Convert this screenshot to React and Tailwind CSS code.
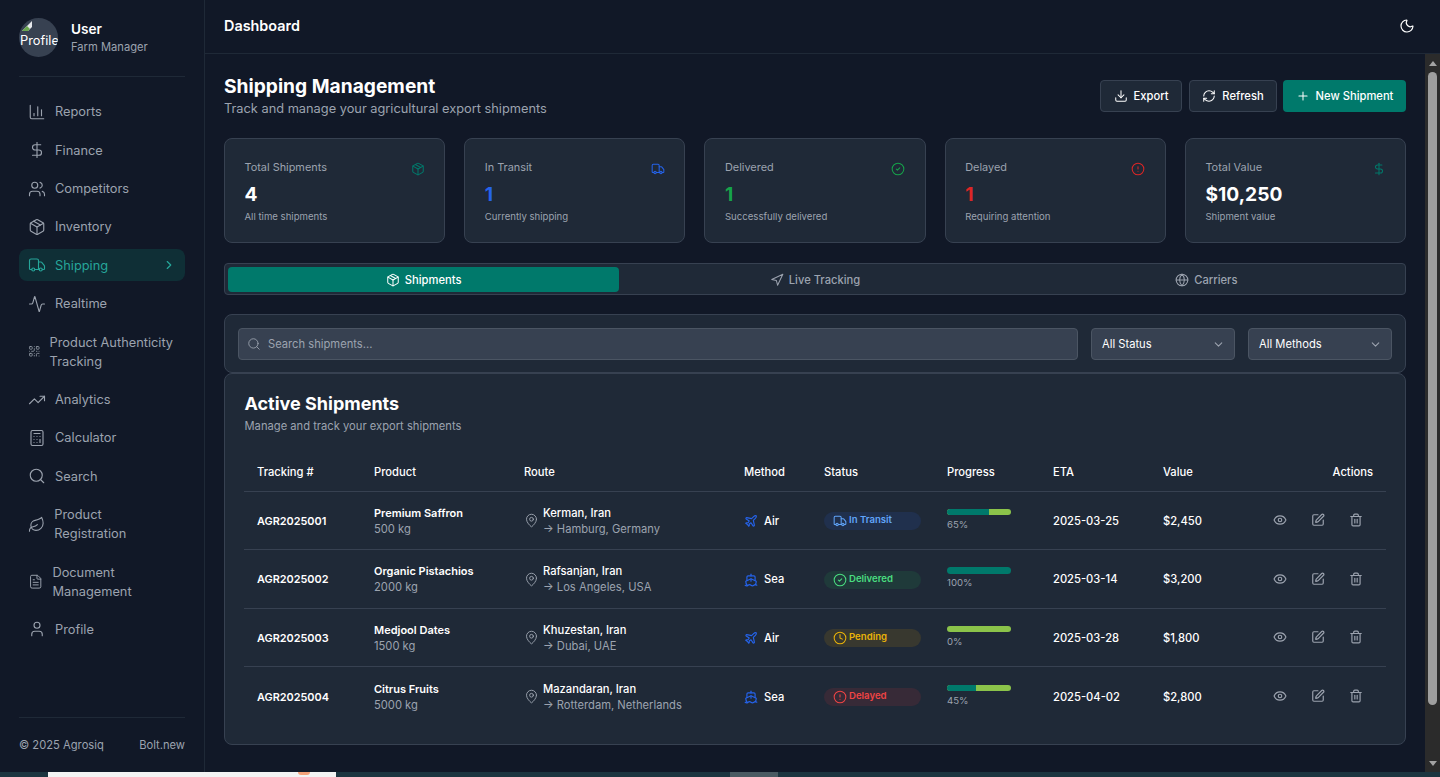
import React from 'react';
import {
  Activity, ChartColumn, Calculator, ChevronDown, ChevronRight, CircleAlert, CircleCheck, Clock, DollarSign, Download, Edit, Eye, FileText,
  Globe, Leaf, MapPin, Moon, Navigation, Package, Plane, Plus, QrCode, RefreshCw, Search, Ship, Trash2, TrendingUp, Truck, User, Users,
} from 'lucide-react';

const navItems = [
  { label: 'Reports', icon: ChartColumn },
  { label: 'Finance', icon: DollarSign },
  { label: 'Competitors', icon: Users },
  { label: 'Inventory', icon: Package },
  { label: 'Shipping', icon: Truck, active: true },
  { label: 'Realtime', icon: Activity },
  { label: 'Product Authenticity Tracking', icon: QrCode, size: 12.6 },
  { label: 'Analytics', icon: TrendingUp },
  { label: 'Calculator', icon: Calculator },
  { label: 'Search', icon: Search },
  { label: 'Product Registration', icon: Leaf, size: 17.3 },
  { label: 'Document Management', icon: FileText, size: 15.4 },
  { label: 'Profile', icon: User },
];

const stats = [
  { label: 'Total Shipments', value: '4', note: 'All time shipments', icon: Package, iconClass: 'text-[#00796b]', valueClass: 'text-white' },
  { label: 'In Transit', value: '1', note: 'Currently shipping', icon: Truck, iconClass: 'text-[#2563eb]', valueClass: 'text-[#2563eb]' },
  { label: 'Delivered', value: '1', note: 'Successfully delivered', icon: CircleCheck, iconClass: 'text-[#16a34a]', valueClass: 'text-[#16a34a]' },
  { label: 'Delayed', value: '1', note: 'Requiring attention', icon: CircleAlert, iconClass: 'text-[#dc2626]', valueClass: 'text-[#dc2626]' },
  { label: 'Total Value', value: '$10,250', note: 'Shipment value', icon: DollarSign, iconClass: 'text-[#00796b]', valueClass: 'text-white' },
];

const statusStyles = {
  'In Transit': { icon: Truck, className: 'bg-[#20304d] text-[#60a5fa]' },
  Delivered: { icon: CircleCheck, className: 'bg-[#1f3a3a] text-[#4ade80]' },
  Pending: { icon: Clock, className: 'bg-[#38382f] text-[#eab308]' },
  Delayed: { icon: CircleAlert, className: 'bg-[#372a37] text-[#ef4444]' },
};

const shipments = [
  { id: 'AGR2025001', product: 'Premium Saffron', qty: '500 kg', from: 'Kerman, Iran', to: 'Hamburg, Germany', method: 'Air', status: 'In Transit', progress: 65, eta: '2025-03-25', value: '$2,450' },
  { id: 'AGR2025002', product: 'Organic Pistachios', qty: '2000 kg', from: 'Rafsanjan, Iran', to: 'Los Angeles, USA', method: 'Sea', status: 'Delivered', progress: 100, eta: '2025-03-14', value: '$3,200' },
  { id: 'AGR2025003', product: 'Medjool Dates', qty: '1500 kg', from: 'Khuzestan, Iran', to: 'Dubai, UAE', method: 'Air', status: 'Pending', progress: 0, eta: '2025-03-28', value: '$1,800' },
  { id: 'AGR2025004', product: 'Citrus Fruits', qty: '5000 kg', from: 'Mazandaran, Iran', to: 'Rotterdam, Netherlands', method: 'Sea', status: 'Delayed', progress: 45, eta: '2025-04-02', value: '$2,800' },
];

const Sidebar = () => (
  <aside className="w-[205px] shrink-0 border-r border-[#1f2937] flex flex-col px-[19px]">
    <div className="h-[77px] shrink-0 border-b border-[#1f2937] flex items-start pt-[18px] gap-[13px]">
      <div className="w-[39px] h-[39px] shrink-0 rounded-full bg-[#374151] overflow-hidden text-[12.8px] leading-[19px] text-white">
        <svg width="14" height="14" viewBox="0 0 14 14" className="ml-[1px] mt-[1px] block">
          <path d="M2 12 L12 2 V8 L8 12 Z" fill="#e5e7eb" />
          <path d="M2 12 L7 7 L10 10 L8 12 Z" fill="#6aa84f" />
        </svg>
        <span className="block -mt-[2px] pl-[1px] whitespace-nowrap">Profile</span>
      </div>
      <div className="pt-[2px]">
        <p className="text-[13.6px] leading-[18px] font-semibold text-white">User</p>
        <p className="text-[11.2px] leading-[18px] text-[#9ca3af]">Farm Manager</p>
      </div>
    </div>

    <nav className="flex flex-col gap-[6.4px] pt-[18.8px] flex-1">
      {navItems.map((item) => {
        const Icon = item.icon;
        return (
          <div
            key={item.label}
            className={`flex items-center gap-[9px] px-[9px] py-[6.5px] rounded-lg text-[12.8px] leading-[19px] ${item.active ? 'bg-[#0f2f36] text-[#26a69a]' : 'text-[#9ca3af]'}`}
          >
            <Icon size={item.size || 18} strokeWidth={1.5} className="shrink-0" />
            <span className="flex-1">{item.label}</span>
            {item.active && <ChevronRight size={14} />}
          </div>
        );
      })}
    </nav>

    <div className="h-[55px] shrink-0 border-t border-[#1f2937] flex items-center justify-between text-[11.2px] text-[#9ca3af]">
      <span>© 2025 Agrosiq</span>
      <span>Bolt.new</span>
    </div>
  </aside>
);

const StatCard = ({ stat }) => {
  const Icon = stat.icon;
  return (
    <div className="h-[105px] rounded-lg border border-[#374151] bg-[#1f2937] px-[19.5px] pt-5 flex justify-between">
      <div>
        <p className="text-[10.9px] leading-[16px] text-[#9ca3af]">{stat.label}</p>
        <p className={`text-[19.2px] leading-[28px] font-bold mt-[5px] ${stat.valueClass}`}>{stat.value}</p>
        <p className="text-[9.6px] leading-[14px] text-[#9ca3af] mt-[2px]">{stat.note}</p>
      </div>
      <Icon size={14} strokeWidth={1.75} className={`mt-[3px] ${stat.iconClass}`} />
    </div>
  );
};

const Tab = ({ icon: Icon, label, active }) => (
  <div className={`flex-1 h-[25px] pt-[2px] rounded flex items-center justify-center gap-[5px] text-[11.2px] font-medium ${active ? 'bg-[#00796b] text-white' : 'text-[#9ca3af]'}`}>
    <Icon size={14} strokeWidth={1.75} />
    {label}
  </div>
);

const Select = ({ label, width }) => (
  <div className={`${width} h-8 shrink-0 rounded border border-[#4b5563] bg-[#374151] pl-[10px] pr-[9px] flex items-center justify-between text-[11.2px] text-white`}>
    {label}
    <ChevronDown size={13} className="text-[#9ca3af]" />
  </div>
);

const ShipmentRow = ({ row, last }) => {
  const status = statusStyles[row.status];
  const StatusIcon = status.icon;
  const MethodIcon = row.method === 'Air' ? Plane : Ship;
  return (
    <tr className={`h-[58.6px] ${last ? '' : 'border-b border-[#374151]'}`}>
      <td className="pl-[13px] pt-px text-[10.9px] font-semibold text-white">{row.id}</td>
      <td className="pl-[13px] pt-px">
        <p className="text-[11px] leading-[16px] font-semibold text-white">{row.product}</p>
        <p className="text-[11.2px] leading-[16px] text-[#9ca3af]">{row.qty}</p>
      </td>
      <td className="pl-[13px] pt-px">
        <div className="flex items-center gap-[4px]">
          <MapPin size={15} strokeWidth={1.5} className="text-[#9ca3af]" />
          <div>
            <p className="text-[11.2px] leading-[16px] font-medium text-white">{row.from}</p>
            <p className="text-[11.2px] leading-[16px] text-[#9ca3af]">→ {row.to}</p>
          </div>
        </div>
      </td>
      <td className="pl-[13px] pt-[2px]">
        <div className="flex items-center gap-[6px] text-[11.2px] font-medium text-white">
          <MethodIcon size={14} className="text-[#2563eb]" />
          {row.method}
        </div>
      </td>
      <td className="pl-[13px] pr-[13px] pt-[2px]">
        <div className={`h-[18px] rounded-full flex items-center gap-[2px] pl-[9px] text-[9.6px] font-semibold ${status.className}`}>
          <StatusIcon size={14} strokeWidth={1.75} />
          <span className="-mt-[2px]">{row.status}</span>
        </div>
      </td>
      <td className="pl-[13px]">
        <div className="w-16 h-[6.5px] rounded-full bg-[#8bc34a] overflow-hidden">
          <div className="h-full bg-[#00796b]" style={{ width: `${row.progress}%` }} />
        </div>
        <p className="text-[9.6px] leading-[14px] text-[#9ca3af] mt-[2.5px]">{row.progress}%</p>
      </td>
      <td className="pl-[13px] pt-[2px] text-[11.2px] font-medium text-white">{row.eta}</td>
      <td className="pl-[13px] pt-[2px] text-[11.2px] font-medium text-white">{row.value}</td>
      <td className="pr-[13px]">
        <div className="flex justify-end gap-1 text-[#9ca3af]">
          <button className="p-[10px]"><Eye size={14} /></button>
          <button className="p-[10px]"><Edit size={14} /></button>
          <button className="p-[10px]"><Trash2 size={14} /></button>
        </div>
      </td>
    </tr>
  );
};

const columns = [
  { label: 'Tracking #', width: 'w-[117px]' },
  { label: 'Product', width: 'w-[150px]' },
  { label: 'Route', width: 'w-[220px]' },
  { label: 'Method', width: 'w-[80px]' },
  { label: 'Status', width: 'w-[123px]' },
  { label: 'Progress', width: 'w-[106px]' },
  { label: 'ETA', width: 'w-[110px]' },
  { label: 'Value', width: 'w-[110px]' },
  { label: 'Actions', width: 'w-[126px]', right: true },
];

const Scrollbar = () => (
  <div className="w-[15px] shrink-0 bg-[#2b2b2b] flex flex-col items-center">
    <div className="h-[18px] flex items-center justify-center">
      <div className="w-0 h-0 border-x-[4.5px] border-x-transparent border-b-[5px] border-b-[#a3a3a3]" />
    </div>
    <div className="w-[9px] h-[633px] rounded-full bg-[#9e9e9e]" />
    <div className="flex-1 flex items-end justify-center pb-[6px]">
      <div className="w-0 h-0 border-x-[4.5px] border-x-transparent border-t-[5px] border-t-[#a3a3a3]" />
    </div>
  </div>
);

const App = () => {
  return (
    <div className="h-[777px] overflow-hidden bg-[#111827] flex flex-col font-['Inter',sans-serif]">
      <div className="h-[772px] flex">
        <Sidebar />
        <div className="flex-1 min-w-0 flex flex-col">
          <header className="h-[54px] shrink-0 border-b border-[#1f2937] flex items-center justify-between pl-[19px] pr-[25px] pb-[1px]">
            <h1 className="text-[14.4px] font-semibold text-white">Dashboard</h1>
            <Moon size={16} className="text-white" strokeWidth={1.75} />
          </header>
          <div className="flex-1 min-h-0 flex">
            <main className="flex-1 min-w-0 pl-[19px] pr-[19px] pt-[20px] overflow-hidden">
              <div className="flex items-start justify-between h-[64px]">
                <div>
                  <h2 className="text-[19.2px] leading-[24px] font-bold text-white">Shipping Management</h2>
                  <p className="text-[12.8px] leading-[20px] mt-px text-[#9ca3af]">Track and manage your agricultural export shipments</p>
                </div>
                <div className="flex mt-[6px] text-[11.2px] font-medium text-white">
                  <button className="h-8 w-[82px] rounded border border-[#374151] bg-[#1f2937] flex items-center justify-center gap-[6px]">
                    <Download size={14} strokeWidth={1.75} /> Export
                  </button>
                  <button className="h-8 w-[88px] ml-[7px] rounded border border-[#374151] bg-[#1f2937] flex items-center justify-center gap-[6px]">
                    <RefreshCw size={14} strokeWidth={1.75} /> Refresh
                  </button>
                  <button className="h-8 w-[123px] ml-[6px] rounded bg-[#00796b] flex items-center justify-center gap-[6px]">
                    <Plus size={14} strokeWidth={1.75} /> New Shipment
                  </button>
                </div>
              </div>

              <div className="grid grid-cols-5 gap-[19.2px]">
                {stats.map((stat) => <StatCard key={stat.label} stat={stat} />)}
              </div>

              <div className="mt-5 h-8 rounded border border-[#374151] bg-[#1f2937] flex items-center px-[3px]">
                <Tab icon={Package} label="Shipments" active />
                <Tab icon={Navigation} label="Live Tracking" />
                <Tab icon={Globe} label="Carriers" />
              </div>

              <div className="mt-[19px] h-[59px] rounded-lg border border-[#374151] bg-[#1f2937] flex items-start gap-[13px] p-[13px]">
                <div className="flex-1 h-8 rounded border border-[#4b5563] bg-[#374151] flex items-center gap-[7px] pl-[8px] text-[11.2px] text-[#9ca3af]">
                  <Search size={14} strokeWidth={1.5} />
                  Search shipments...
                </div>
                <Select label="All Status" width="w-[144px]" />
                <Select label="All Methods" width="w-[144px]" />
              </div>

              <section className="h-[372px] rounded-lg border border-[#374151] bg-[#1f2937] px-[19px] pt-[17px]">
                <h3 className="text-[18px] leading-[26px] font-bold text-white px-[0.5px]">Active Shipments</h3>
                <p className="text-[11.2px] leading-[18px] text-[#9ca3af] px-[0.5px]">Manage and track your export shipments</p>
                <table className="w-full table-fixed border-collapse mt-[17px]">
                  <thead>
                    <tr className="h-[39px] border-b border-[#374151]">
                      {columns.map((col) => (
                        <th key={col.label} className={`${col.width} pt-[2px] text-[11.2px] font-medium text-white ${col.right ? 'text-right pr-[13px]' : 'text-left pl-[13px]'}`}>
                          {col.label}
                        </th>
                      ))}
                    </tr>
                  </thead>
                  <tbody>
                    {shipments.map((row, i) => <ShipmentRow key={row.id} row={row} last={i === shipments.length - 1} />)}
                  </tbody>
                </table>
              </section>
            </main>
            <Scrollbar />
          </div>
        </div>
      </div>
      <div className="h-[5px] bg-[#1c3540] flex">
        <div className="w-[48px]" />
        <div className="w-[288px] bg-[#f3f3f3] flex justify-end pr-[26px]">
          <div className="w-[12px] h-[3px] rounded-b-full bg-[#f4a27a]" />
        </div>
        <div className="w-[394px]" />
        <div className="w-[48px] bg-[#4a5a62]" />
      </div>
    </div>
  );
};

export default App;
